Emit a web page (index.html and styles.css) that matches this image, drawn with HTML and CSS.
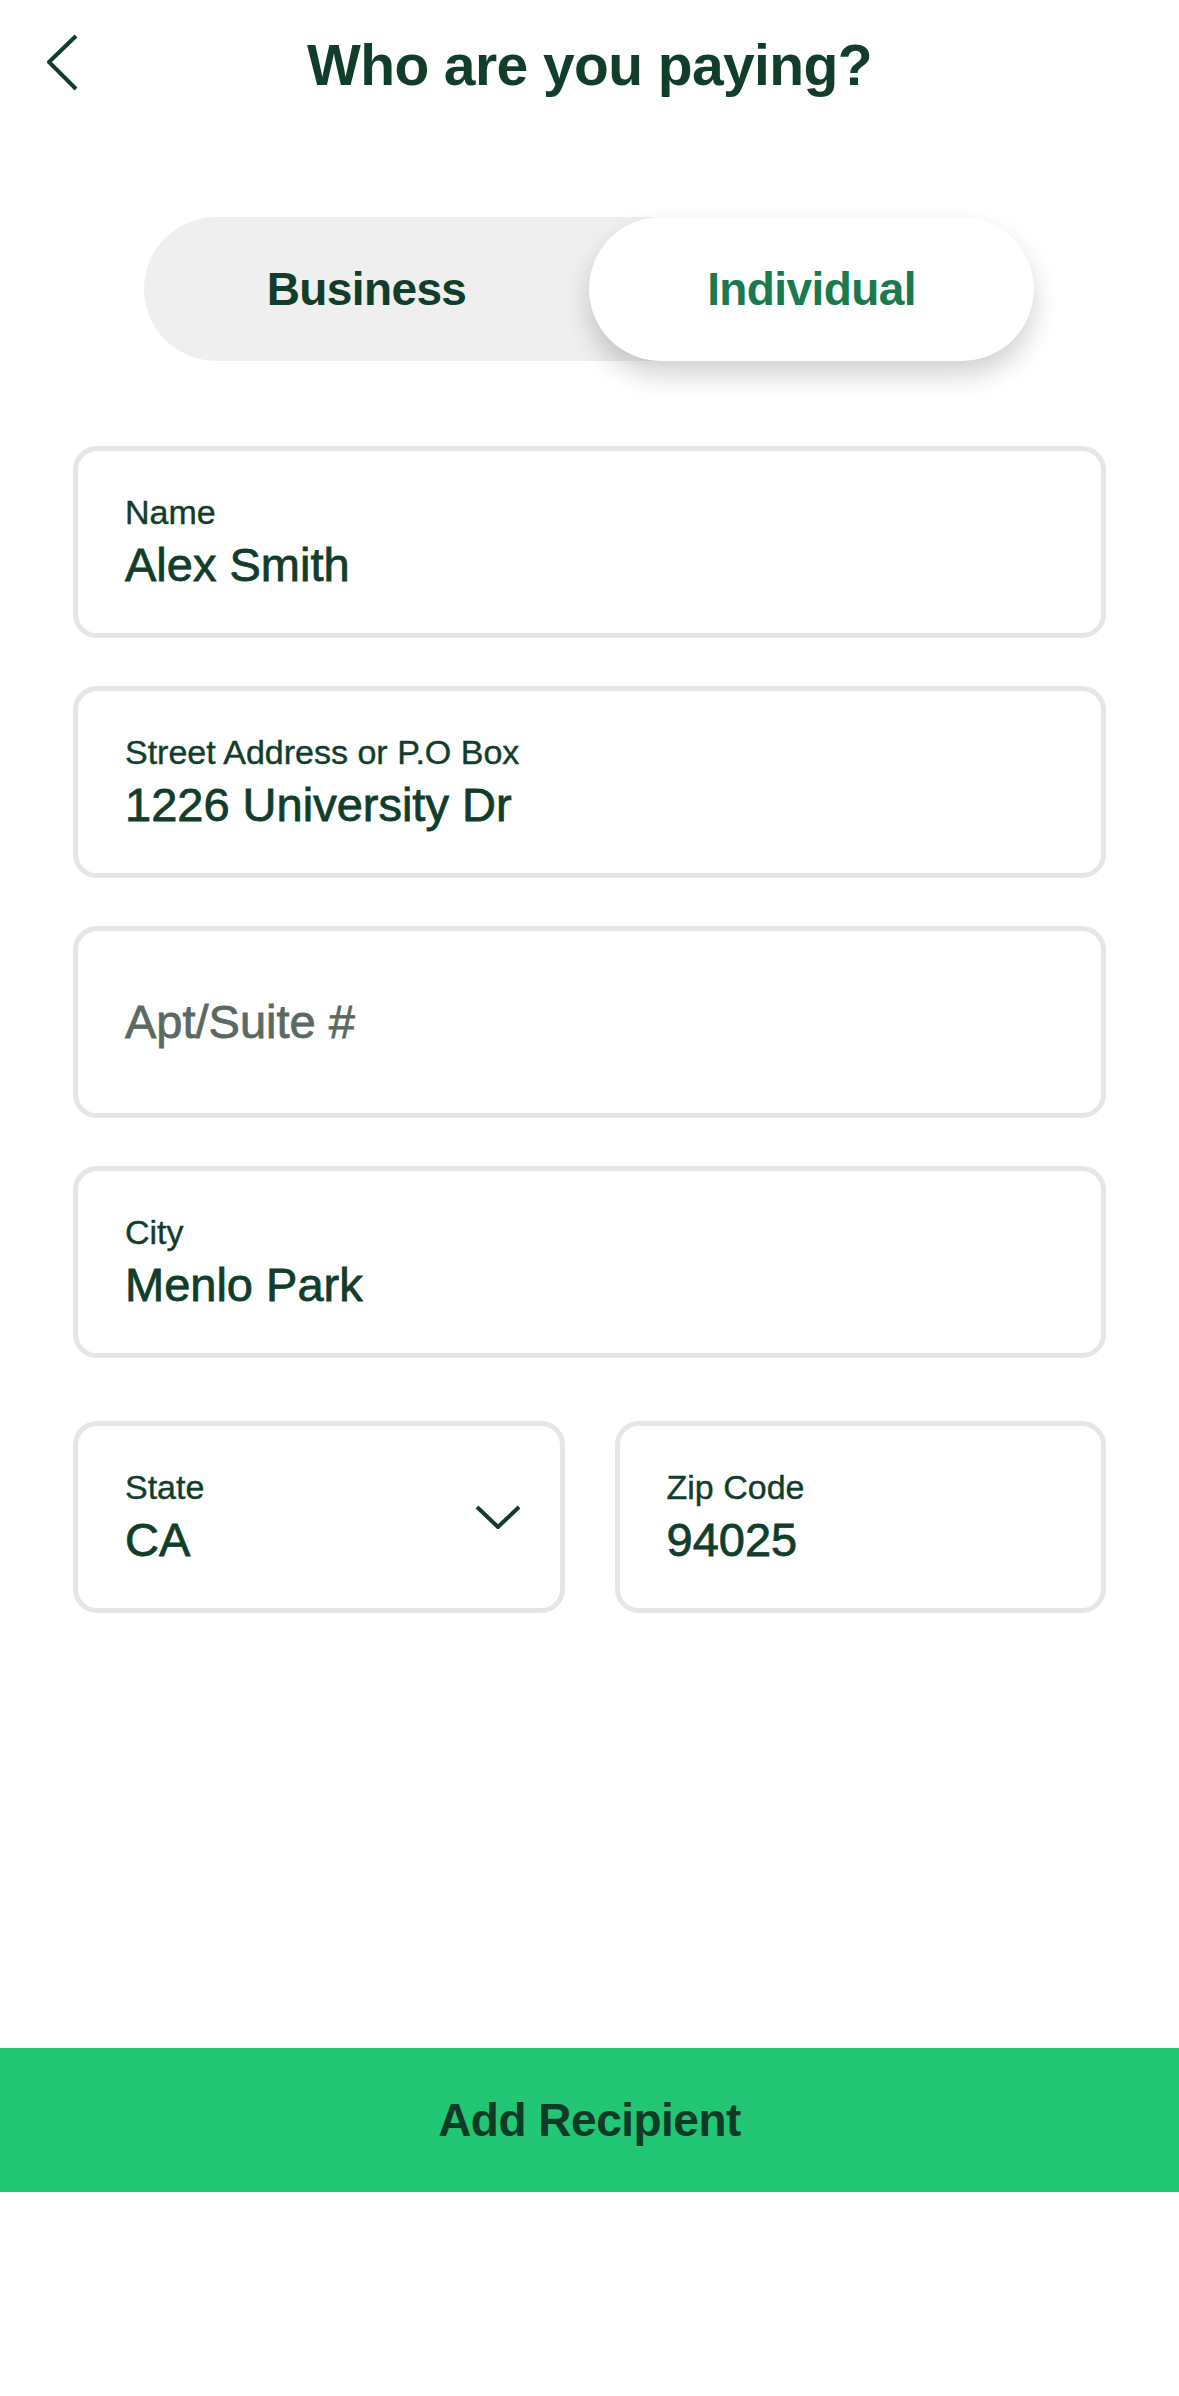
FILE: index.html
```html
<!DOCTYPE html>
<html lang="en">
<head>
    <meta charset="UTF-8">
    <meta name="viewport" content="width=device-width, initial-scale=1.0">
    <title>Who are you paying?</title>
    <link rel="stylesheet" href="styles.css">
</head>
<body>
    <div class="screen">
        <header class="top-bar">
            <button class="back-btn" type="button" aria-label="Back">
                <svg width="48" height="64" viewBox="0 0 48 64">
                    <path d="M38 6 L11 32 L38 59" fill="none" stroke="#113d2b" stroke-width="4" stroke-linejoin="round"/>
                </svg>
            </button>
            <h1 class="title">Who are you paying?</h1>
            <span class="top-spacer"></span>
        </header>

        <div class="segmented">
            <button class="segment" type="button">Business</button>
            <button class="segment active" type="button">Individual</button>
        </div>

        <form class="recipient-form" id="recipientForm">
            <label class="field">
                <span class="field-label">Name</span>
                <span class="field-value">Alex Smith</span>
            </label>
            <label class="field">
                <span class="field-label">Street Address or P.O Box</span>
                <span class="field-value">1226 University Dr</span>
            </label>
            <label class="field">
                <span class="field-placeholder">Apt/Suite #</span>
            </label>
            <label class="field">
                <span class="field-label">City</span>
                <span class="field-value">Menlo Park</span>
            </label>
            <div class="field-row">
                <label class="field field-select">
                    <span class="field-text">
                        <span class="field-label">State</span>
                        <span class="field-value">CA</span>
                    </span>
                    <svg width="46" height="26" viewBox="0 0 46 26">
                        <path d="M2 3 L23 23 L44 3" fill="none" stroke="#113d2b" stroke-width="4" stroke-linejoin="round"/>
                    </svg>
                </label>
                <label class="field">
                    <span class="field-label">Zip Code</span>
                    <span class="field-value">94025</span>
                </label>
            </div>
        </form>

        <button class="submit-btn" type="submit" form="recipientForm">Add Recipient</button>
        <div class="bottom-space"></div>
    </div>
</body>
</html>
```

FILE: styles.css
```css
* {
    box-sizing: border-box;
}
body {
    margin: 0;
    background-color: #fff;
    color: #113d2b;
    font-family: 'Liberation Sans', Arial, sans-serif;
}
button {
    font-family: inherit;
    border: none;
    background: none;
    padding: 0;
    cursor: pointer;
}
.screen {
    display: flex;
    flex-direction: column;
    min-height: 100vh;
}

/* header */
.top-bar {
    display: grid;
    grid-template-columns: 128px 1fr 128px;
    align-items: center;
    height: 130px;
}
.back-btn {
    display: flex;
    margin-left: 38px;
    margin-top: -6px;
    width: 48px;
}
.title {
    margin: 0;
    text-align: center;
    font-size: 57px;
    line-height: 1;
    font-weight: bold;
    letter-spacing: -0.6px;
    color: #113d2b;
}

/* business / individual switch */
.segmented {
    display: grid;
    grid-template-columns: 1fr 1fr;
    width: 890px;
    height: 144px;
    margin: 87px auto 0 144px;
    background-color: #efefef;
    border-radius: 72px;
}
.segment {
    border-radius: 72px;
    font-size: 46px;
    font-weight: bold;
    letter-spacing: -0.6px;
    color: #113d2b;
}
.segment.active {
    background-color: #fff;
    color: #187a4d;
    box-shadow: 0 14px 26px rgba(0, 0, 0, 0.18);
}

/* form fields */
.recipient-form {
    display: flex;
    flex-direction: column;
    gap: 48px;
    margin: 85px 73px 0 73px;
}
.field {
    display: flex;
    flex-direction: column;
    justify-content: center;
    gap: 6px;
    height: 192px;
    padding: 0 40px 0 47px;
    border: 5px solid #e6e6e6;
    border-radius: 24px;
}
/* values are a touch heavier than the regular face */
.field-label {
    font-size: 34px;
    line-height: 40px;
    -webkit-text-stroke: 0.4px currentColor;
}
.field-value {
    font-size: 47px;
    line-height: 54px;
    -webkit-text-stroke: 0.8px currentColor;
}
.field-placeholder {
    font-size: 47px;
    line-height: 54px;
    color: #5b6963;
    -webkit-text-stroke: 0.8px currentColor;
}
.field-row {
    display: grid;
    grid-template-columns: 1fr 1fr;
    gap: 50px;
    margin-top: 15px;
}
.field-select {
    flex-direction: row;
    align-items: center;
    justify-content: space-between;
    padding-right: 39px;
}
.field-text {
    display: flex;
    flex-direction: column;
    gap: 6px;
}

/* bottom action */
.submit-btn {
    margin-top: auto;
    height: 144px;
    width: 100%;
    background-color: #22c675;
    font-size: 46px;
    font-weight: bold;
    letter-spacing: -0.5px;
    color: #0f3b26;
}
.bottom-space {
    height: 204px;
}
```
